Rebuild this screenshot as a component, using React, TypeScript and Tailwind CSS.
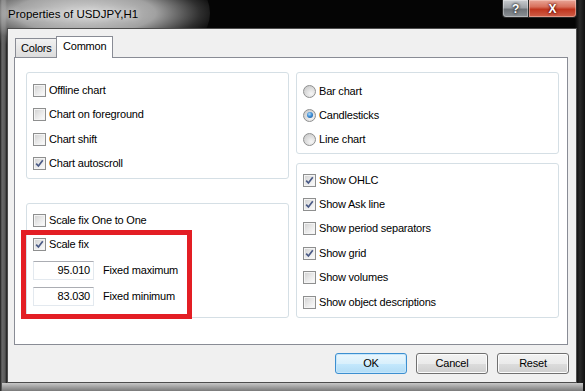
import React from "react";

const font = "font-['Liberation_Sans',Arial,sans-serif]";

function Check({ checked }: { checked?: boolean }) {
  return (
    <span className="w-[13px] h-[13px] shrink-0 border border-[#8e8f8f] bg-[#f4f4f4] p-[1px] flex">
      <span className="flex-1 bg-[linear-gradient(135deg,#d4d4d4_0%,#e9e9e9_50%,#fafafa_100%)] flex items-center justify-center">
        {checked && (
          <svg width="9" height="9" viewBox="0 0 9 9">
            <path d="M1.2 4.6 L3.4 7 L7.8 1.2" fill="none" stroke="#4a5a86" strokeWidth="1.7" />
          </svg>
        )}
      </span>
    </span>
  );
}

function Radio({ checked }: { checked?: boolean }) {
  return (
    <span className="w-[13px] h-[13px] shrink-0 rounded-full border border-[#8e8f8f] bg-[radial-gradient(circle_at_65%_70%,#f6f6f6_0%,#dadada_55%,#c4c4c4_100%)] flex items-center justify-center">
      {checked && (
        <span className="w-[6px] h-[6px] rounded-full bg-[radial-gradient(circle_at_40%_35%,#b6dcf8_0%,#3f8fd6_45%,#174f96_100%)]" />
      )}
    </span>
  );
}

function Row({ label, checked, radio, h = "h-[24.5px]" }: { label: string; checked?: boolean; radio?: boolean; h?: string }) {
  return (
    <div className={`${h} flex items-center gap-[3px]`}>
      {radio ? <Radio checked={checked} /> : <Check checked={checked} />}
      <span className="leading-none">{label}</span>
    </div>
  );
}

function NumField({ value, label }: { value: string; label: string }) {
  return (
    <div className="h-[19px] flex items-center gap-[9px]">
      <div className="w-[61px] h-[19px] border border-[#e3e9ef] border-t-[#abadb3] bg-white flex items-center justify-end pr-[3px] leading-none">
        {value}
      </div>
      <span className="leading-none">{label}</span>
    </div>
  );
}

function Btn({ label, primary }: { label: string; primary?: boolean }) {
  return (
    <div
      className={
        primary
          ? "w-[72px] h-[21px] rounded-[3px] border border-[#3c8fd0] bg-[linear-gradient(#eaf6fd_0%,#d9f0fc_50%,#c4e8fd_51%,#b2dcf5_100%)] shadow-[inset_0_0_0_1px_#c6e6fb] flex items-center justify-center leading-none"
          : "w-[72px] h-[21px] rounded-[3px] border border-[#707070] bg-[linear-gradient(#f2f2f2_0%,#ebebeb_50%,#dddddd_51%,#cfcfcf_100%)] shadow-[inset_0_0_0_1px_#fcfcfc] flex items-center justify-center leading-none"
      }
    >
      {label}
    </div>
  );
}

export default function App() {
  return (
    <div className={`relative w-[585px] h-[391px] overflow-hidden bg-[linear-gradient(90deg,#1a1a1a_0px,#6a6a6a_2px,#5a5a5a_5px,#1a1a1a_7px,#050505_20px,#050505_575px,#2a2a2a_580px,#101010_585px)] flex flex-col text-[11px] text-black tracking-[-0.2px] ${font}`}>
      {/* aero glow behind title */}
      <div className="absolute left-[-40px] top-[-22px] w-[250px] h-[70px] rounded-full bg-[radial-gradient(ellipse_at_center,rgba(225,225,225,0.95)_0%,rgba(200,200,200,0.8)_40%,rgba(110,110,110,0.4)_65%,rgba(0,0,0,0)_78%)]" />
      {/* title bar */}
      <div className="relative h-[28px] flex">
        <div className="pl-[8px] pt-[9px] text-[11.5px] leading-none tracking-[0px] [text-shadow:0_0_6px_rgba(255,255,255,0.9)]">
          Properties of USDJPY,H1
        </div>
        <div className="ml-auto mr-[8px] flex h-[18px]">
          <div className="w-[27px] h-[18px] rounded-bl-[4px] border border-t-0 border-[#2a2a2a] bg-[linear-gradient(#c9ccd0_0%,#9ea2a7_45%,#6e7378_55%,#8c9196_100%)] shadow-[inset_0_0_0_1px_rgba(255,255,255,0.35)] flex items-center justify-center text-white font-bold text-[12px] [text-shadow:0_0_2px_#222,0_0_3px_#222] leading-none">
            ?
          </div>
          <div className="w-[48px] h-[18px] rounded-br-[4px] border border-t-0 border-l-0 border-[#2a2a2a] bg-[linear-gradient(#e8a597_0%,#d8705c_40%,#c0351e_55%,#d0604a_100%)] shadow-[inset_0_0_0_1px_rgba(255,220,210,0.45)] flex items-center justify-center text-white font-bold text-[12px] [text-shadow:0_0_2px_#5a0a00,0_0_3px_#5a0a00] leading-none">
            X
          </div>
        </div>
      </div>
      {/* client */}
      <div className="relative ml-[7px] w-[570px] h-[355px] border border-[#4d4d4d] bg-[#f0f0f0] flex flex-col">
        {/* tabs */}
        <div className="relative z-10 mt-[7px] h-[21px] pl-[7px] flex items-end">
          <div className="w-[42px] h-[19px] border border-b-0 border-[#898c95] bg-[linear-gradient(#f2f2f2,#dcdcdc)] pl-[5px] flex items-center leading-none">
            Colors
          </div>
          <div className="w-[57px] h-[22px] -ml-[1px] -mb-[1px] border border-b-0 border-[#898c95] bg-white pl-[6px] pb-[2px] flex items-center leading-none">
            Common
          </div>
        </div>
        {/* panel */}
        <div className="ml-[6px] w-[554px] h-[288px] border border-[#898c95] bg-white pl-[11px] pt-[14px] flex gap-[7px]">
          <div className="w-[263px] flex flex-col">
            <div className="h-[107px] rounded-[3px] border border-[#d5dfe5] pl-[6px] pt-[5px] flex flex-col">
              <Row label="Offline chart" />
              <Row label="Chart on foreground" />
              <Row label="Chart shift" />
              <Row label="Chart autoscroll" checked />
            </div>
            <div className="mt-[24px] h-[115px] rounded-[3px] border border-[#d5dfe5] pl-[6px] pt-[4px] flex flex-col">
              <Row label="Scale fix One to One" h="h-[24px]" />
              <Row label="Scale fix" checked h="h-[24px]" />
              <div className="mt-[5px] flex flex-col gap-[7px]">
                <NumField value="95.010" label="Fixed maximum" />
                <NumField value="83.030" label="Fixed minimum" />
              </div>
            </div>
          </div>
          <div className="w-[263px] flex flex-col">
            <div className="h-[82px] rounded-[3px] border border-[#d5dfe5] pl-[6px] pt-[6px] flex flex-col">
              <Row label="Bar chart" radio h="h-[24px]" />
              <Row label="Candlesticks" radio checked h="h-[24px]" />
              <Row label="Line chart" radio h="h-[24px]" />
            </div>
            <div className="mt-[9px] h-[155px] rounded-[3px] border border-[#d5dfe5] pl-[6px] pt-[4px] flex flex-col">
              <Row label="Show OHLC" checked h="h-[24.4px]" />
              <Row label="Show Ask line" checked h="h-[24.4px]" />
              <Row label="Show period separators" h="h-[24.4px]" />
              <Row label="Show grid" checked h="h-[24.4px]" />
              <Row label="Show volumes" h="h-[24.4px]" />
              <Row label="Show object descriptions" h="h-[24.4px]" />
            </div>
          </div>
        </div>
        {/* buttons */}
        <div className="mt-[8px] pr-[7px] flex justify-end gap-[9px]">
          <Btn label="OK" primary />
          <Btn label="Cancel" />
          <Btn label="Reset" />
        </div>
      </div>
      {/* bottom frame */}
      <div className="flex-1 bg-[linear-gradient(#c8c8c8,#7a7a7a)] mx-[2px]" />
      {/* annotation */}
      <div className="absolute left-[21px] top-[230px] w-[171px] h-[89px] border-[5px] border-[#e31e24]" />
    </div>
  );
}
